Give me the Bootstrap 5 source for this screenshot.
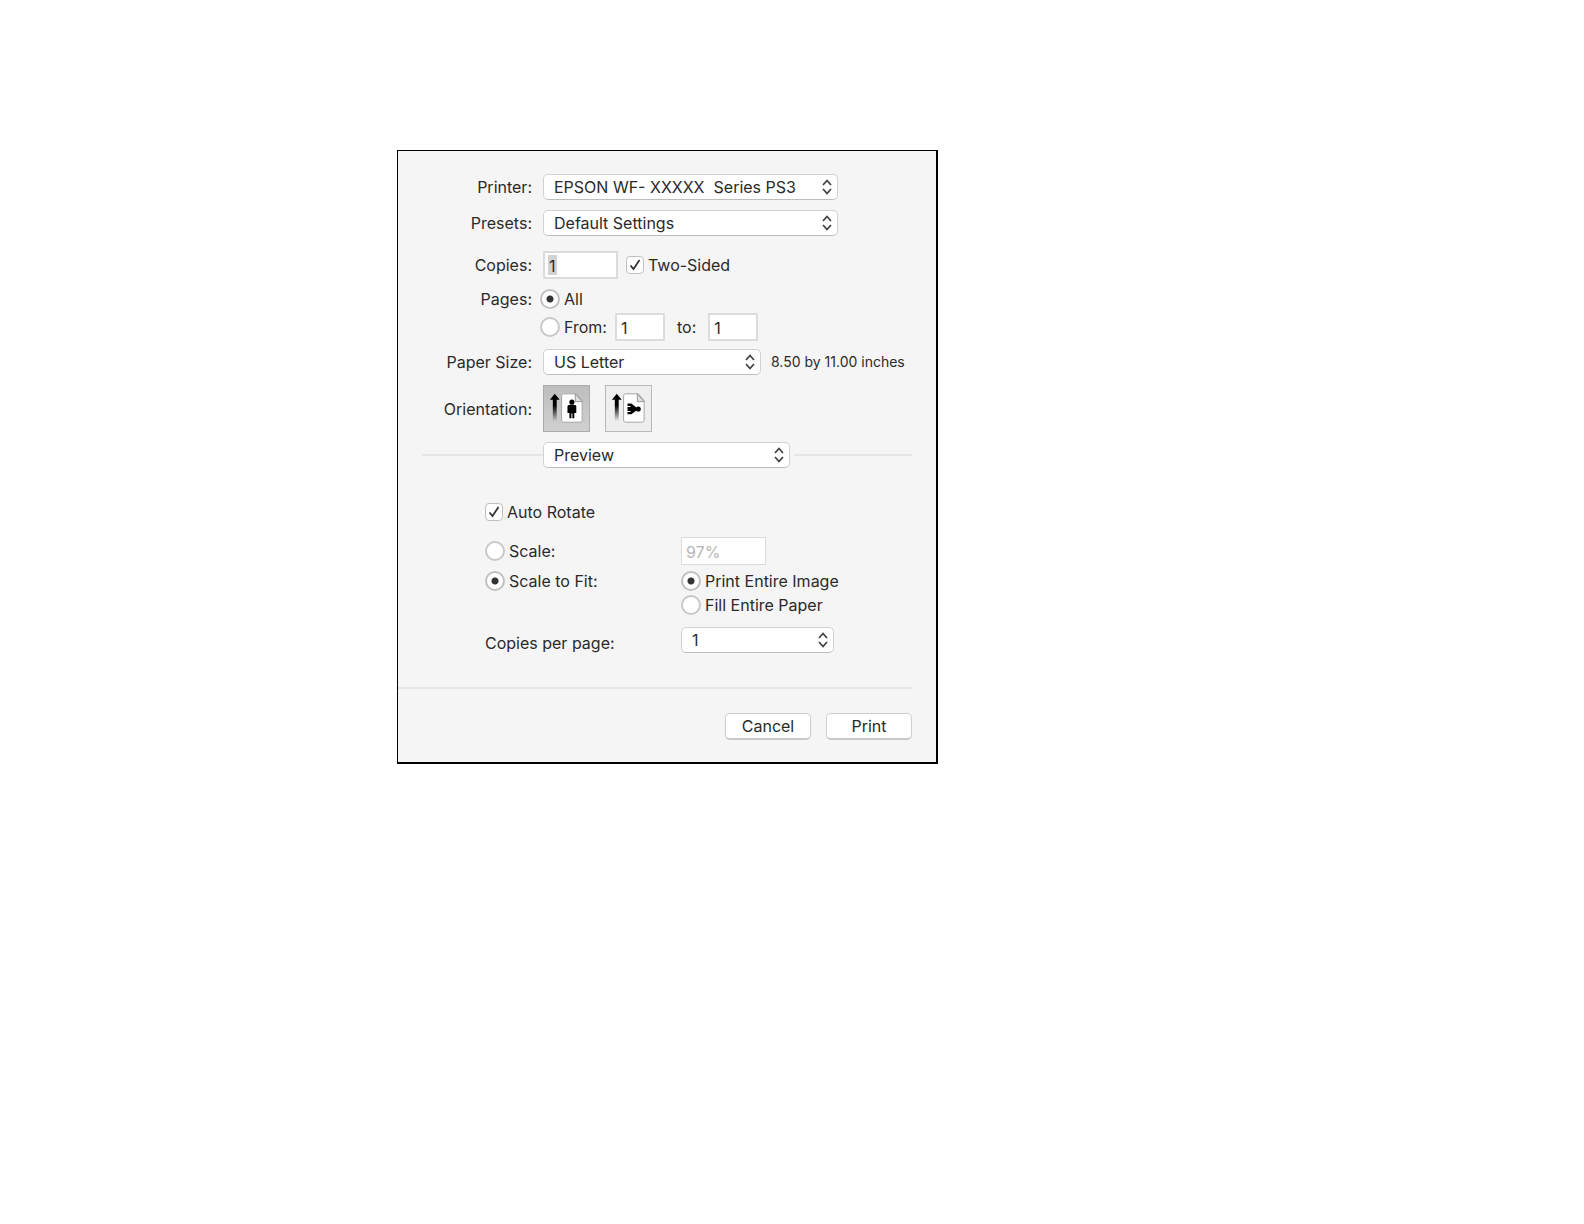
<!DOCTYPE html>
<html lang="en">
<head>
<meta charset="utf-8">
<meta name="viewport" content="width=device-width, initial-scale=1">
<title>Print</title>
<link href="https://cdn.jsdelivr.net/npm/bootstrap@5.3.0/dist/css/bootstrap.min.css" rel="stylesheet">
<style>
  body { background: #fff; color: #2a2a2a; font-family: Inter, "Liberation Sans", sans-serif; font-size: 16px; line-height: 20px; }
  .page-area { padding: 150px 16px 40px 397px; }
  .print-dialog { max-width: 541px; background: #f5f5f5; border: solid #000; border-width: 1px 2px 2px 1px; padding: 23px 24px 22px 0; }
  .line-label { width: 134px; margin-right: 11px; text-align: right; flex: none; }
  .radio-label { margin-right: 8px; }
  .mt-10 { margin-top: 10px; }
  .mt-15 { margin-top: 15px; }
  .mt-34 { margin-top: 34px; }
  .gap-15 { gap: 15px; }
  .form-select, .form-control { color: #2a2a2a; font-size: 16px; line-height: 20px; }
  .form-select {
    height: 26px; padding: 0 28px 0 10px; border: 1px solid #d2d2d2; border-bottom-color: #bdbdbd; border-radius: 5px;
    background: #fff url("data:image/svg+xml,%3Csvg xmlns='http://www.w3.org/2000/svg' viewBox='0 0 10 16'%3E%3Cpath d='M1 6l4-4.5L9 6M1 10l4 4.5L9 10' fill='none' stroke='%23444' stroke-width='1.8'/%3E%3C/svg%3E") no-repeat right 5px center / 10px 16px;
  }
  .form-control { height: 28px; padding: 1px 4px 0; border: 2px solid #dcdcdc; border-radius: 0; background: #fff; flex: none; }
  .form-control:disabled { color: #b5b5b5; background: #fff; border-width: 1px; }
  .form-check-input { margin: 0; flex: none; background-color: #fff; border: 1px solid #bdbdbd; }
  .form-check-input[type=radio] { width: 20px; height: 20px; border-width: 2px; border-color: #c8c8c8; }
  .form-check-input[type=checkbox] { width: 18px; height: 18px; border-radius: 4px; border-color: #c0c0c0; }
  .form-check-input:checked { background-color: #fff; border-color: #c0c0c0; }
  .form-check-input:checked[type=radio] { background-image: radial-gradient(circle, #333 3px, transparent 4px); }
  .form-check-input:checked[type=checkbox] { background-image: url("data:image/svg+xml,%3Csvg xmlns='http://www.w3.org/2000/svg' viewBox='0 0 16 16'%3E%3Cpath d='M3.5 8.5l3 3.5 6-9' fill='none' stroke='%23333' stroke-width='1.8'/%3E%3C/svg%3E"); }
  .full-select { width: 295px; }
  .paper-select { width: 218px; }
  .pane-select { width: 247px; flex: none; }
  .count-select { width: 153px; }
  .copies-box { width: 75px; }
  .range-box { width: 50px; }
  .scale-box { width: 85px; }
  .digit-mark { background: linear-gradient(#d2d2d2, #d2d2d2) no-repeat 3px 2px / 9px 20px #fff; }
  .size-note { font-size: 14px; margin-left: 10px; }
  .orient-btn { width: 47px; height: 47px; padding: 0; border: 1px solid #b9b9b9; border-radius: 0; background: #eee; flex: none; }
  .orient-btn.chosen { background: linear-gradient(#bebebe, #d0d0d0); border-color: #ababab; }
  .orient-btn svg { display: block; }
  .rule-line { height: 2px; background: #e5e5e5; }
  .pane-lead { width: 121px; flex: none; }
  .options-area { padding-left: 87px; }
  .options-left { width: 196px; flex: none; }
  .fit-row { margin-top: 6px; }
  .per-page-row { margin-top: 12px; }
  .dialog-btn { width: 86px; height: 27px; padding: 0; border: 1px solid #cfcfcf; border-bottom: 2px solid #c8c8c8; border-radius: 5px; background: #fff; color: #2a2a2a; font-size: 16px; line-height: 20px; }
</style>
</head>
<body>
<main class="page-area">
  <form class="print-dialog">
    <div class="d-flex align-items-center">
      <label class="line-label" for="printer">Printer:</label>
      <select class="form-select full-select" id="printer"><option>EPSON WF- XXXXX &nbsp;Series PS3</option></select>
    </div>
    <div class="d-flex align-items-center mt-10">
      <label class="line-label" for="presets">Presets:</label>
      <select class="form-select full-select" id="presets"><option>Default Settings</option></select>
    </div>
    <div class="d-flex align-items-center mt-15">
      <label class="line-label" for="copies">Copies:</label>
      <input class="form-control copies-box digit-mark" id="copies" type="text" value="1">
      <input class="form-check-input ms-2" id="duplex" type="checkbox" checked>
      <label class="ms-1" for="duplex">Two-Sided</label>
    </div>
    <div class="d-flex align-items-center mt-10">
      <span class="line-label radio-label" id="pages-label">Pages:</span>
      <div class="d-flex align-items-center" role="group" aria-labelledby="pages-label">
        <input class="form-check-input" id="pages-all" type="radio" name="pages" checked>
        <label class="ms-1" for="pages-all">All</label>
      </div>
    </div>
    <div class="d-flex align-items-center mt-1">
      <span class="line-label radio-label"></span>
      <input class="form-check-input" id="pages-range" type="radio" name="pages">
      <label class="ms-1 me-2" for="pages-range">From:</label>
      <input class="form-control range-box" id="from-page" type="text" value="1" aria-label="From page">
      <label class="mx-2 px-1" for="to-page">to:</label>
      <input class="form-control range-box" id="to-page" type="text" value="1">
    </div>
    <div class="d-flex align-items-center mt-2">
      <label class="line-label" for="paper">Paper Size:</label>
      <select class="form-select paper-select" id="paper"><option>US Letter</option></select>
      <span class="size-note text-nowrap">8.50 by 11.00 inches</span>
    </div>
    <div class="d-flex align-items-center mt-10">
      <span class="line-label">Orientation:</span>
      <div class="d-flex gap-15">
      <button class="btn orient-btn chosen" type="button" aria-label="Portrait">
        <svg width="45" height="45" viewBox="0 0 46 46">
          <defs><linearGradient id="fade" x1="0" y1="0" x2="0" y2="1"><stop offset=".3" stop-color="#000"/><stop offset="1" stop-color="#000" stop-opacity="0"/></linearGradient></defs>
          <path d="M11 8l5 6H6z"/><path d="M9 13h4v23H9z" fill="url(#fade)"/>
          <path d="M20 8h13l6 7v20q0 2-2 2H20q-2 0-2-2V10q0-2 2-2z" fill="#fff" stroke="#a5a5a5"/>
          <path d="M32 8v8h7z" fill="#ddd" stroke="#999"/>
          <circle cx="28.500" cy="16.500" r="2.600"/><path d="M25 19.500h7l1 1v7h-2V33h-2v-5h-1v5h-2v-5.500h-2v-7z"/>
        </svg>
      </button>
      <button class="btn orient-btn" type="button" aria-label="Landscape">
        <svg width="45" height="45" viewBox="0 0 46 46">
          <path d="M11 8l5 6H6z"/><path d="M9 13h4v23H9z" fill="url(#fade)"/>
          <path d="M20 8h13l6 7v20q0 2-2 2H20q-2 0-2-2V10q0-2 2-2z" fill="#fff" stroke="#a5a5a5"/>
          <path d="M32 8v8h7z" fill="#ddd" stroke="#999"/>
          <circle cx="33" cy="23.500" r="2.600"/><path d="M22 18h4l5 4v3l-5 4h-4v-2.500h3v-1h-3v-4h3v-1h-3z"/>
        </svg>
      </button>
      </div>
    </div>
    <div class="d-flex align-items-center mt-10 ps-4">
      <div class="rule-line pane-lead"></div>
      <select class="form-select pane-select" aria-label="Options pane"><option>Preview</option></select>
      <div class="rule-line flex-fill ms-1"></div>
    </div>
    <div class="options-area">
      <div class="d-flex align-items-center mt-34">
        <input class="form-check-input" id="auto-rotate" type="checkbox" checked>
        <label class="ms-1" for="auto-rotate">Auto Rotate</label>
      </div>
      <div class="d-flex align-items-center mt-15">
        <div class="options-left d-flex align-items-center">
          <input class="form-check-input" id="scale" type="radio" name="scaling">
          <label class="ms-1" for="scale">Scale:</label>
        </div>
        <input class="form-control scale-box" type="text" value="97%" aria-label="Scale percent" disabled>
      </div>
      <div class="d-flex fit-row">
        <div class="options-left d-flex align-items-start">
          <input class="form-check-input" id="scale-fit" type="radio" name="scaling" checked>
          <label class="ms-1" for="scale-fit">Scale to Fit:</label>
        </div>
        <div class="d-flex flex-column gap-1">
          <div class="d-flex align-items-center">
            <input class="form-check-input" id="entire-image" type="radio" name="fit" checked>
            <label class="ms-1" for="entire-image">Print Entire Image</label>
          </div>
          <div class="d-flex align-items-center">
            <input class="form-check-input" id="entire-paper" type="radio" name="fit">
            <label class="ms-1" for="entire-paper">Fill Entire Paper</label>
          </div>
        </div>
      </div>
      <div class="d-flex align-items-end per-page-row">
        <label class="options-left" for="per-page">Copies per page:</label>
        <select class="form-select count-select" id="per-page"><option>1</option></select>
      </div>
    </div>
    <div class="rule-line mt-34"></div>
    <div class="d-flex justify-content-end gap-15 mt-4">
      <button class="btn dialog-btn" type="button">Cancel</button>
      <button class="btn dialog-btn" type="submit">Print</button>
    </div>
  </form>
</main>
<script src="https://cdn.jsdelivr.net/npm/bootstrap@5.3.0/dist/js/bootstrap.bundle.min.js"></script>
</body>
</html>
